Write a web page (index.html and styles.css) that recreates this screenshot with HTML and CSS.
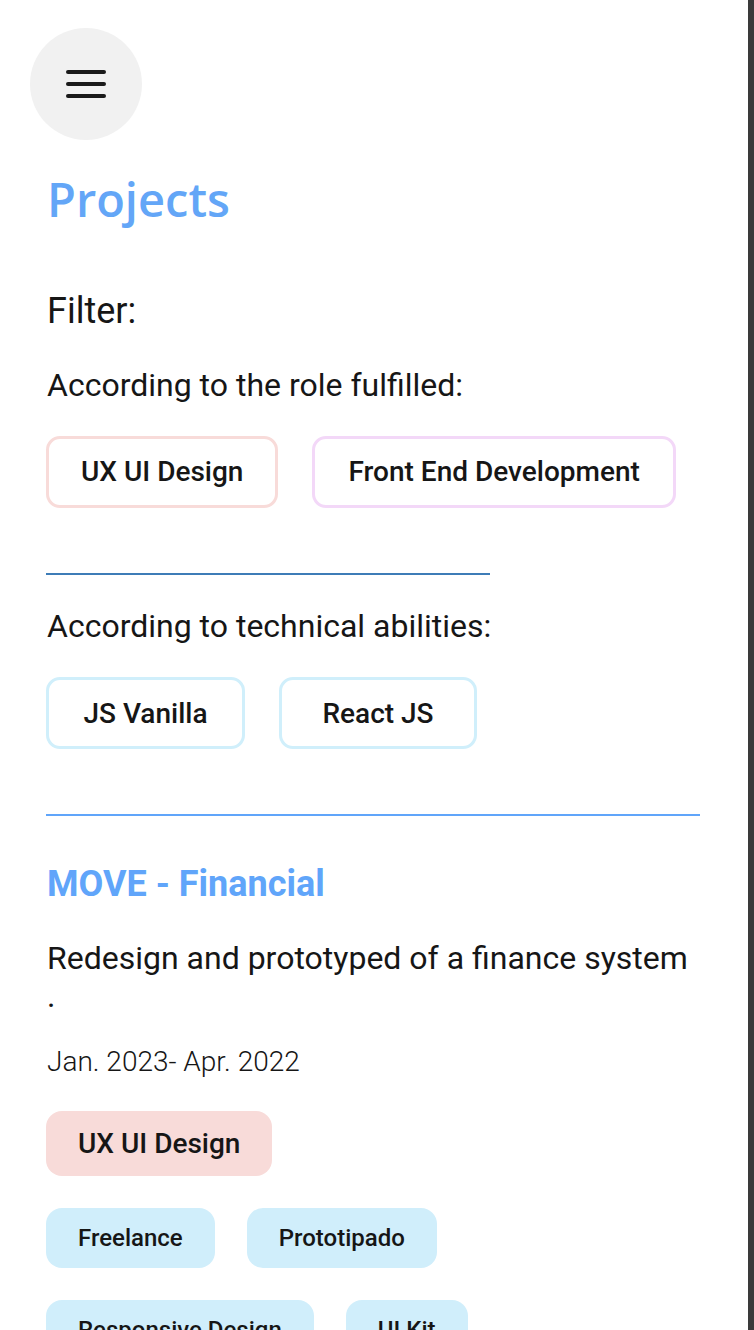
FILE: index.html
```html
<!DOCTYPE html>
<html lang="en">
<head>
<meta charset="utf-8">
<title>Projects</title>
<link rel="stylesheet" href="styles.css">
</head>
<body>
<div class="page">
  <button class="menu-btn" aria-label="Menu">
    <svg width="40" height="28" viewBox="0 0 40 28" fill="none" stroke="#1a1a1a" stroke-width="4" stroke-linecap="round">
      <line x1="2" y1="2" x2="38" y2="2"/>
      <line x1="2" y1="14" x2="38" y2="14"/>
      <line x1="2" y1="26" x2="38" y2="26"/>
    </svg>
  </button>
  <main class="content">
    <h1 class="title">Projects</h1>
    <section class="filters">
      <h2 class="filter-title">Filter:</h2>
      <h3 class="filter-sub">According to the role fulfilled:</h3>
      <div class="chip-row">
        <button class="chip chip-ux">UX UI Design</button>
        <button class="chip chip-fe">Front End Development</button>
      </div>
      <hr class="divider-short">
      <h3 class="filter-sub">According to technical abilities:</h3>
      <div class="chip-row">
        <button class="chip chip-tech chip-js">JS Vanilla</button>
        <button class="chip chip-tech chip-react">React JS</button>
      </div>
    </section>
    <hr class="divider">
    <article class="project">
      <h2 class="project-title">MOVE - Financial</h2>
      <p class="project-desc">Redesign and prototyped of a finance system .</p>
      <p class="project-date">Jan. 2023- Apr. 2022</p>
      <div class="pill-row">
        <span class="pill pill-role">UX UI Design</span>
      </div>
      <div class="pill-row">
        <span class="pill pill-tag">Freelance</span>
        <span class="pill pill-tag">Prototipado</span>
      </div>
      <div class="pill-row">
        <span class="pill pill-tag">Responsive Design</span>
        <span class="pill pill-tag">UI Kit</span>
      </div>
    </article>
  </main>
</div>
</body>
</html>
```

FILE: styles.css
```css
html {
  background: #3a3a3a;
}

body {
  margin: 0;
  width: 748px;
  background: #ffffff;
  font-family: Roboto, "Liberation Sans", sans-serif;
  color: #161616;
}

.page {
  height: 1330px;
  overflow: hidden;
  padding-top: 28px;
  box-sizing: border-box;
}

.menu-btn {
  display: flex;
  align-items: center;
  justify-content: center;
  width: 112px;
  height: 112px;
  margin-left: 30px;
  padding: 0;
  border: none;
  border-radius: 50%;
  background: #f1f1f1;
}

.content {
  padding: 0 48px 0 46px;
}

.title {
  margin: 31px 0 0 1px;
  font-family: "Open Sans", "Noto Sans", sans-serif;
  font-weight: 600;
  font-size: 47px;
  line-height: 1.2;
  color: #63a6f7;
}

.filters {
  margin-top: 63px;
}

.filter-title {
  margin: 0 0 0 1px;
  font-weight: 400;
  font-size: 36px;
  line-height: 1.2;
}

.filter-sub {
  margin: 32px 0 0 1px;
  font-weight: 400;
  font-size: 32px;
  line-height: 1.2;
}

.chip-row {
  display: flex;
  gap: 34px;
  margin-top: 32px;
}

.chip {
  height: 72px;
  padding: 0 32px;
  border: 3px solid #f8dbd9;
  border-radius: 14px;
  background: #ffffff;
  font-family: Roboto, sans-serif;
  font-weight: 500;
  font-size: 28px;
  color: #161616;
}

.chip-fe {
  padding: 0 33px;
  border-color: #f3d8f8;
}

.chip-tech {
  border-color: #d0effb;
}

.chip-js {
  width: 199px;
}

.chip-react {
  width: 198px;
}

.divider-short {
  width: 444px;
  height: 2px;
  margin: 65px 0 0;
  border: none;
  background: #3d7cb7;
}

.divider {
  height: 2px;
  margin: 65px 0 0;
  border: none;
  background: #60a5fa;
}

.project {
  padding-top: 47px;
}

.project-title {
  margin: 0 0 0 1px;
  font-weight: 700;
  font-size: 36px;
  line-height: 1.2;
  color: #60a5fa;
}

.project-desc {
  margin: 32px 0 0 1px;
  font-size: 32px;
  line-height: 1.2;
}

.project-date {
  margin: 30px 0 0 1px;
  font-weight: 300;
  font-size: 28px;
  line-height: 1.2;
}

.pill-row {
  display: flex;
  gap: 32px;
  margin-top: 32px;
}

.pill {
  display: flex;
  align-items: center;
  border-radius: 16px;
  font-weight: 500;
}

.pill-role {
  height: 65px;
  padding: 0 32px;
  background: #f8dbd9;
  font-size: 28px;
}

.pill-tag {
  height: 60px;
  padding: 0 32px;
  background: #d0eefb;
  font-size: 24px;
}
```
